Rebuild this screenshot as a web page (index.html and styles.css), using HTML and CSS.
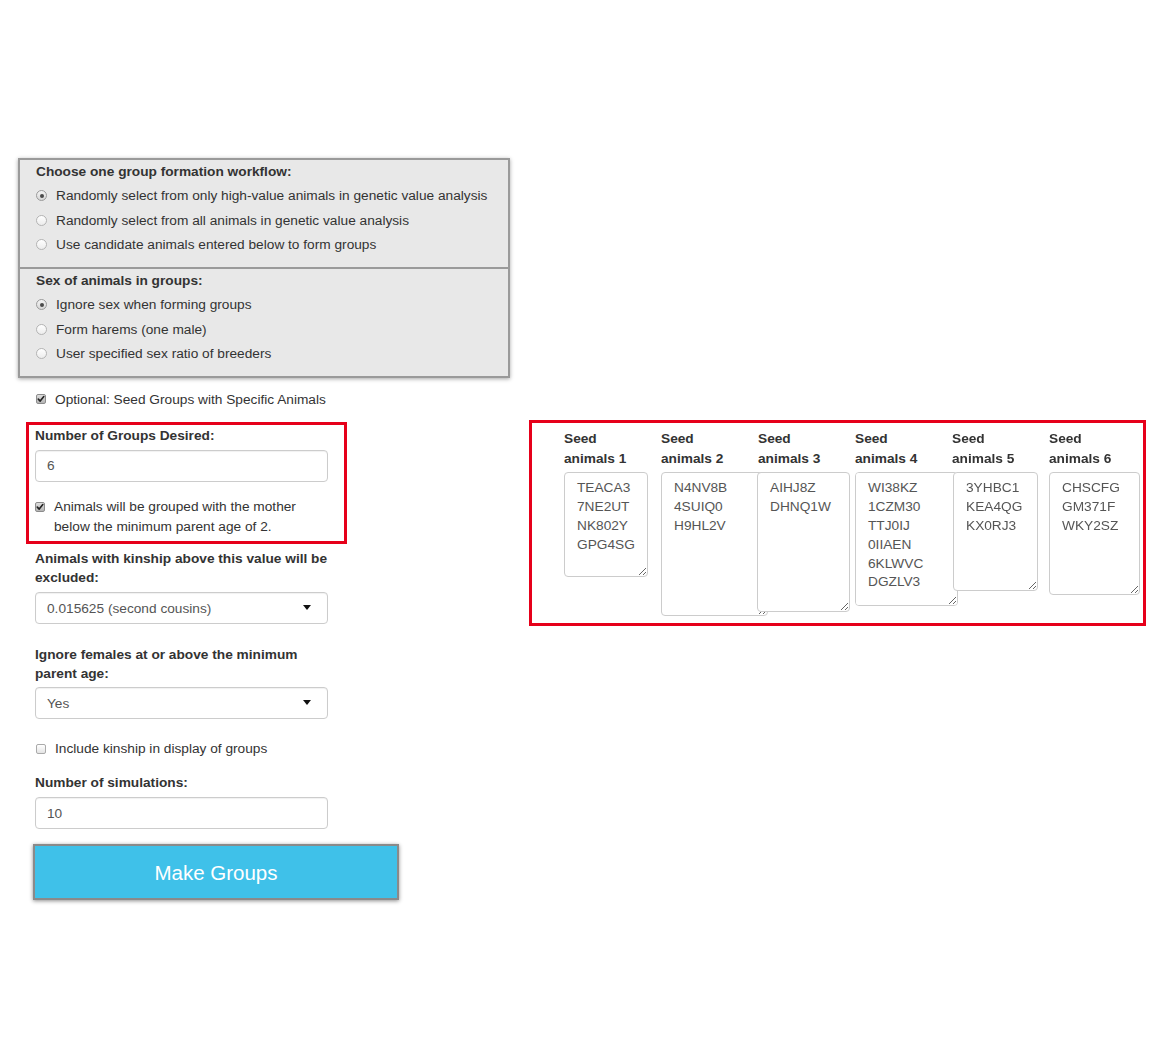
FILE: index.html
```html
<!DOCTYPE html>
<html>
<head>
<meta charset="utf-8">
<title>Group formation</title>
<link rel="stylesheet" href="styles.css">
</head>
<body>
<div class="page">
  <div class="wells">
    <div class="well">
      <div class="well-title">Choose one group formation workflow:</div>
      <div class="radios">
        <div class="radio"><span class="rb on"></span>Randomly select from only high-value animals in genetic value analysis</div>
        <div class="radio"><span class="rb"></span>Randomly select from all animals in genetic value analysis</div>
        <div class="radio"><span class="rb"></span>Use candidate animals entered below to form groups</div>
      </div>
    </div>
    <div class="well well2">
      <div class="well-title">Sex of animals in groups:</div>
      <div class="radios">
        <div class="radio"><span class="rb on"></span>Ignore sex when forming groups</div>
        <div class="radio"><span class="rb"></span>Form harems (one male)</div>
        <div class="radio"><span class="rb"></span>User specified sex ratio of breeders</div>
      </div>
    </div>
  </div>

  <div class="cbrow seedopt"><span class="cb on"><svg viewBox="0 0 10 10" width="10" height="10"><path d="M2.3 5.1 L4.2 7.1 L7.8 2.6" fill="none" stroke="#222" stroke-width="1.6" stroke-linecap="round" stroke-linejoin="round"/></svg></span>Optional: Seed Groups with Specific Animals</div>

  <div class="main">
    <div class="leftcol">
      <div class="redbox">
        <div class="lbl">Number of Groups Desired:</div>
        <div class="field">6</div>
        <div class="cbrow mother"><span class="cb on"><svg viewBox="0 0 10 10" width="10" height="10"><path d="M2.3 5.1 L4.2 7.1 L7.8 2.6" fill="none" stroke="#222" stroke-width="1.6" stroke-linecap="round" stroke-linejoin="round"/></svg></span><span class="mother-text">Animals will be grouped with the mother below the minimum parent age of 2.</span></div>
      </div>

      <div class="lbl lbl-kin">Animals with kinship above this value will be excluded:</div>
      <div class="field select"><span>0.015625 (second cousins)</span><span class="caret"></span></div>

      <div class="lbl lbl-fem">Ignore females at or above the minimum parent age:</div>
      <div class="field select"><span>Yes</span><span class="caret"></span></div>

      <div class="cbrow kin"><span class="cb"></span>Include kinship in display of groups</div>

      <div class="lbl lbl-sim">Number of simulations:</div>
      <div class="field">10</div>

      <div class="btn">Make Groups</div>
    </div>

    <div class="seedbox">
      <div class="seedcol"><div class="seedlbl">Seed animals 1</div><textarea class="ta ta1">TEACA3
7NE2UT
NK802Y
GPG4SG</textarea></div>
      <div class="seedcol"><div class="seedlbl">Seed animals 2</div><textarea class="ta ta2">N4NV8B
4SUIQ0
H9HL2V</textarea></div>
      <div class="seedcol"><div class="seedlbl">Seed animals 3</div><textarea class="ta ta3">AIHJ8Z
DHNQ1W</textarea></div>
      <div class="seedcol"><div class="seedlbl">Seed animals 4</div><textarea class="ta ta4">WI38KZ
1CZM30
TTJ0IJ
0IIAEN
6KLWVC
DGZLV3


</textarea></div>
      <div class="seedcol"><div class="seedlbl">Seed animals 5</div><textarea class="ta ta5">3YHBC1
KEA4QG
KX0RJ3</textarea></div>
      <div class="seedcol"><div class="seedlbl">Seed animals 6</div><textarea class="ta ta6">CHSCFG
GM371F
WKY2SZ</textarea></div>
    </div>
  </div>
</div>
</body>
</html>
```

FILE: styles.css
```css
html, body {
  margin: 0;
  background: #ffffff;
}

body {
  font-family: "Liberation Sans", Arial, Helvetica, sans-serif;
  font-size: 13.7px;
  line-height: 19.6px;
  color: #333333;
}

.page {
  padding: 158px 0 0 18px;
  width: 1152px;
  height: 1056px;
  box-sizing: border-box;
}

/* gray panel with two wells */
.wells {
  width: 492px;
  box-sizing: border-box;
  border: 2px solid #9a9a9a;
  background: #e8e8e8;
  box-shadow: 0 1px 4px rgba(0, 0, 0, 0.35);
}

.well {
  padding: 2px 16px 10px 16px;
}

.well2 {
  border-top: 2px solid #9a9a9a;
}

.well-title {
  font-weight: bold;
}

.radios {
  margin-top: 2px;
}

.radio {
  display: flex;
  align-items: center;
  height: 24.5px;
}

.rb {
  flex: none;
  width: 11px;
  height: 11px;
  box-sizing: border-box;
  border-radius: 50%;
  border: 1px solid #b4b4b4;
  background: linear-gradient(#ffffff, #ececec);
  margin-right: 9px;
  display: flex;
  align-items: center;
  justify-content: center;
}

.rb.on {
  border-color: #9a9a9a;
  background: linear-gradient(#f4f4f4, #d6d6d6);
}

.rb.on::after {
  content: "";
  width: 4px;
  height: 4px;
  border-radius: 50%;
  background: #4a4a4a;
}

/* checkboxes */
.cbrow {
  display: flex;
  align-items: center;
}

.cb {
  flex: none;
  width: 10px;
  height: 10px;
  box-sizing: border-box;
  border: 1px solid #aaaaaa;
  border-radius: 2px;
  background: linear-gradient(#ffffff, #e4e4e4);
  margin-right: 9px;
  position: relative;
}

.cb.on {
  border-color: #8c8c8c;
  background: linear-gradient(#dedede, #b4b4b4);
}

.cb svg {
  position: absolute;
  left: -1px;
  top: -1px;
  display: block;
}

.seedopt {
  margin: 11.5px 0 0 18px;
}

/* main row */
.main {
  display: flex;
  align-items: flex-start;
  margin-top: 10.7px;
}

.leftcol {
  flex: none;
  width: 511px;
  box-sizing: border-box;
  padding-left: 17px;
}

.redbox {
  width: 321px;
  box-sizing: border-box;
  margin: 2px 0 0 -9px;
  border: 3px solid #e6001a;
  padding: 1px 16px 5px 6px;
}

.lbl {
  font-weight: bold;
  width: 293px;
  margin-bottom: 4px;
}

.field {
  width: 293px;
  height: 32px;
  box-sizing: border-box;
  border: 1px solid #cccccc;
  border-radius: 4px;
  box-shadow: inset 0 1px 1px rgba(0, 0, 0, 0.06);
  padding: 1px 11px 0 11px;
  display: flex;
  align-items: center;
  color: #555555;
  background: #ffffff;
}

.select {
  justify-content: space-between;
  padding-right: 16px;
}

.caret {
  width: 0;
  height: 0;
  border-left: 4.5px solid transparent;
  border-right: 4.5px solid transparent;
  border-top: 5px solid #111111;
  margin-top: -3px;
}

.mother {
  margin-top: 15.5px;
  align-items: flex-start;
}

.mother .cb {
  margin-top: 5px;
}

.mother-text {
  width: 273px;
}

.lbl-kin {
  margin-top: 4.5px;
  margin-bottom: 4.3px;
}

.lbl-fem {
  margin-top: 20.3px;
  margin-bottom: 3.6px;
}

.kin {
  margin-top: 19.8px;
  margin-left: 1px;
}

.lbl-sim {
  margin-top: 14.2px;
  margin-bottom: 4.8px;
}

.btn {
  width: 366px;
  height: 56.5px;
  box-sizing: border-box;
  margin: 14.6px 0 0 -2px;
  padding-top: 1px;
  background: #3fc1e9;
  border: 2px solid #8a8a8a;
  box-shadow: 0 1px 4px rgba(0, 0, 0, 0.45);
  color: #ffffff;
  font-size: 20.5px;
  display: flex;
  align-items: center;
  justify-content: center;
}

/* seed animals box */
.seedbox {
  flex: none;
  width: 617px;
  height: 206px;
  box-sizing: border-box;
  border: 3px solid #e6001a;
  padding: 6.5px 0 0 32px;
  display: flex;
  align-items: flex-start;
}

.seedcol {
  flex: none;
  width: 97px;
}

.seedlbl {
  font-weight: bold;
  width: 82px;
  line-height: 19.2px;
  margin-bottom: 4.1px;
}

.ta {
  display: block;
  box-sizing: border-box;
  margin: 0;
  border: 1px solid #cccccc;
  border-radius: 4px;
  padding: 6.5px 12px 6px 12px;
  font-family: inherit;
  font-size: 13.7px;
  line-height: 18.8px;
  color: #555555;
  background: #ffffff;
  overflow: hidden;
}

.ta1 { width: 84px;  height: 105px; }
.ta2 { width: 107px; height: 144px; }
.ta3 { width: 93px;  height: 140px; margin-left: -1px; }
.ta4 { width: 103px; height: 134px; overflow-y: scroll; }
.ta5 { width: 85px;  height: 119px; margin-left: 1px; }
.ta6 { width: 91px;  height: 123px; }

.ta4::-webkit-scrollbar {
  width: 14px;
}

.ta4::-webkit-scrollbar-track {
  background: #fafafa;
  border-left: 1px solid #e6e6e6;
}

.ta4::-webkit-scrollbar-thumb {
  background: #8f8f8f;
  border-radius: 4px;
  border: 3px solid transparent;
  border-right-width: 5px;
  background-clip: padding-box;
}

.ta4::-webkit-scrollbar-corner {
  background: #ffffff;
  border: 1px solid #dddddd;
}
```
